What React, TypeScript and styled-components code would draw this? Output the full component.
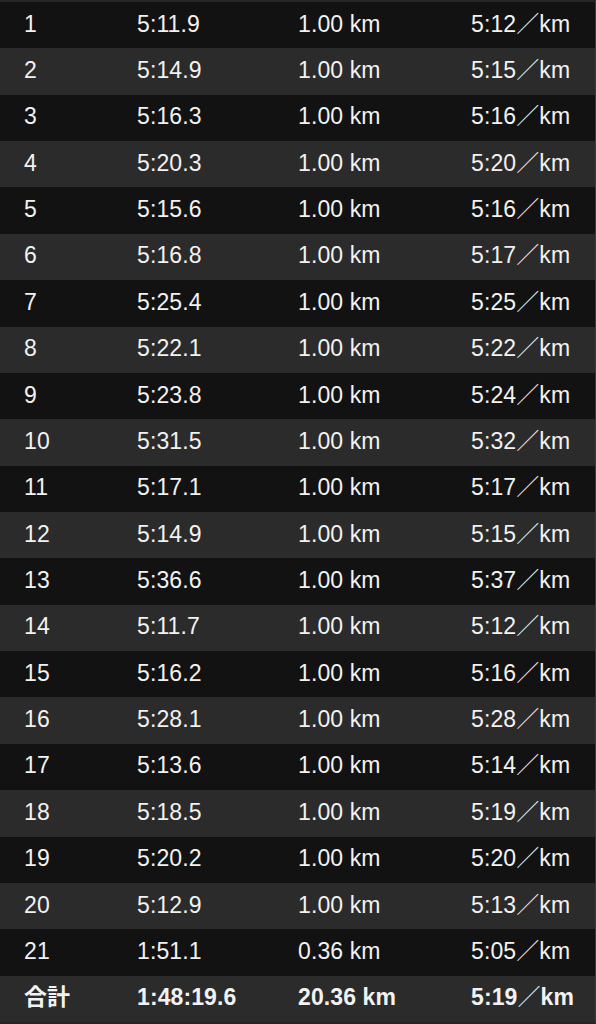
import React from "react";
import styled, { createGlobalStyle } from "styled-components";

const Global = createGlobalStyle`
  html, body { margin: 0; padding: 0; background: #2a2a2a; }
  body { font-family: "Liberation Sans", "Noto Sans CJK JP", sans-serif; }
`;

const Table = styled.div`
  width: 596px;
  height: 1024px;
  box-sizing: border-box;
  border-top: 2px solid #262626;
  border-bottom: 2px solid #262626;
  border-right: 1px solid #3a3a3a;
  background: #262626;
  display: grid;
  grid-template-rows: repeat(22, 1fr);
`;

const Row = styled.div<{ $light: boolean; $bold?: boolean }>`
  display: grid;
  grid-template-columns: 113px 161px 173px 1fr;
  align-items: center;
  padding-left: 24px;
  padding-bottom: 3px;
  background: ${(p) => (p.$light ? "#2b2b2b" : "#121212")};
  color: #f2f2f2;
  font-size: 23px;
  line-height: 26px;
  font-weight: ${(p) => (p.$bold ? 700 : 400)};
  letter-spacing: 0.1px;
`;

const Cell = styled.span`
  white-space: nowrap;
  height: 26px;
  line-height: 26px;
`;

const Slash = styled.span`
  font-family: "Noto Sans CJK JP", sans-serif;
  font-weight: 300;
  line-height: 0;
  vertical-align: baseline;
`;

const data: [string, string, string, string][] = [
  ["1", "5:11.9", "1.00 km", "5:12"],
  ["2", "5:14.9", "1.00 km", "5:15"],
  ["3", "5:16.3", "1.00 km", "5:16"],
  ["4", "5:20.3", "1.00 km", "5:20"],
  ["5", "5:15.6", "1.00 km", "5:16"],
  ["6", "5:16.8", "1.00 km", "5:17"],
  ["7", "5:25.4", "1.00 km", "5:25"],
  ["8", "5:22.1", "1.00 km", "5:22"],
  ["9", "5:23.8", "1.00 km", "5:24"],
  ["10", "5:31.5", "1.00 km", "5:32"],
  ["11", "5:17.1", "1.00 km", "5:17"],
  ["12", "5:14.9", "1.00 km", "5:15"],
  ["13", "5:36.6", "1.00 km", "5:37"],
  ["14", "5:11.7", "1.00 km", "5:12"],
  ["15", "5:16.2", "1.00 km", "5:16"],
  ["16", "5:28.1", "1.00 km", "5:28"],
  ["17", "5:13.6", "1.00 km", "5:14"],
  ["18", "5:18.5", "1.00 km", "5:19"],
  ["19", "5:20.2", "1.00 km", "5:20"],
  ["20", "5:12.9", "1.00 km", "5:13"],
  ["21", "1:51.1", "0.36 km", "5:05"],
  ["合計", "1:48:19.6", "20.36 km", "5:19"],
];

export default function App() {
  return (
    <>
      <Global />
      <Table>
        {data.map((r, i) => (
          <Row key={i} $light={i % 2 === 1} $bold={i === data.length - 1}>
            <Cell>{r[0]}</Cell>
            <Cell>{r[1]}</Cell>
            <Cell>{r[2]}</Cell>
            <Cell>
              {r[3]}
              <Slash>／</Slash>km
            </Cell>
          </Row>
        ))}
      </Table>
    </>
  );
}
